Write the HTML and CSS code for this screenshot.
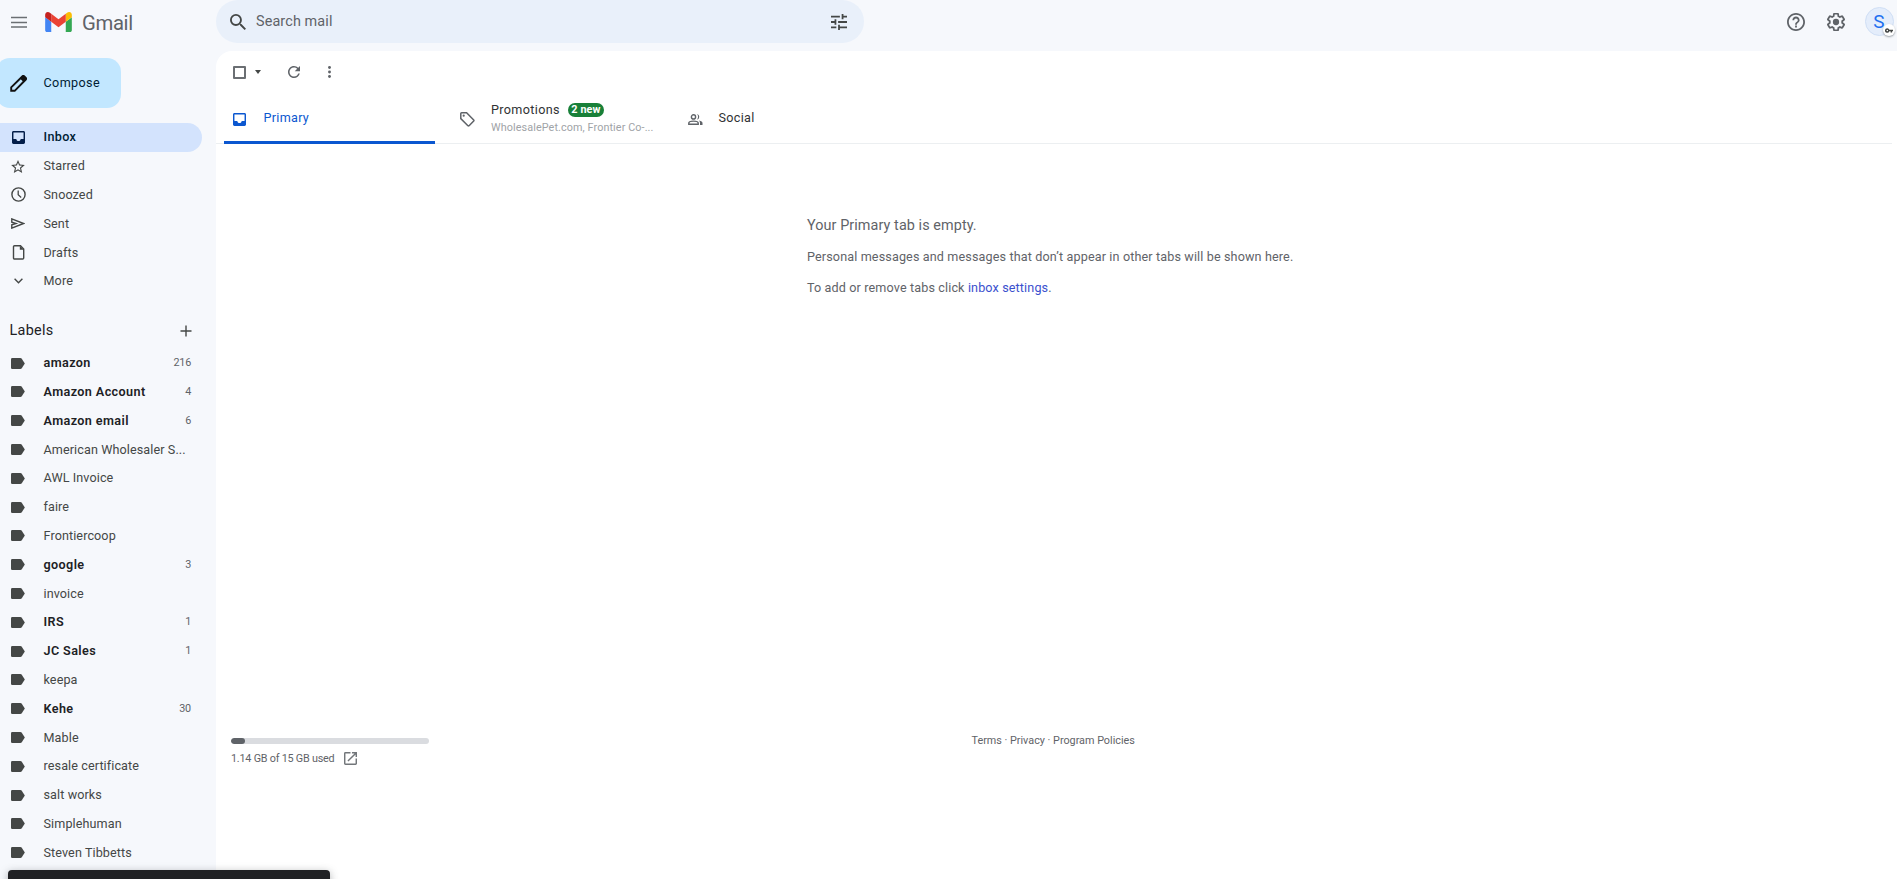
FILE: index.html
```
<!DOCTYPE html>
<html lang="en">
<head>
<meta charset="utf-8">
<title>Gmail</title>
<link rel="stylesheet" href="styles.css">
</head>
<body>
<svg width="0" height="0" class="defs"><defs>
<symbol id="label" viewBox="0 0 14 11"><path d="M1.2 0H9.3Q10.2 0 10.8.8L13.8 5.5 10.8 10.2Q10.2 11 9.3 11H1.2Q0 11 0 9.8V1.2Q0 0 1.2 0Z"/></symbol>
<symbol id="inbox" viewBox="3 3 18 18"><path d="M19 3H5c-1.1 0-2 .9-2 2v14c0 1.1.9 2 2 2h14c1.1 0 2-.9 2-2V5c0-1.1-.9-2-2-2zm0 11h-4c0 1.66-1.35 3-3 3s-3-1.34-3-3H5V5h14v9z"/></symbol>
</defs></svg>
<header class="header">
  <div class="brand">
    <svg class="menu" viewBox="0 0 16 12"><path d="M0 1.500h16M0 6.500h16M0 11h16" fill="none" stroke="#6b6f73" stroke-width="1.500"/></svg>
    <svg class="logo" viewBox="52 42 88 66"><path fill="#4285f4" d="M58 108h14V74L52 59v43c0 3.32 2.69 6 6 6"/><path fill="#34a853" d="M120 108h14c3.32 0 6-2.69 6-6V59l-20 15"/><path fill="#fbbc04" d="M120 48v26l20-15v-8c0-7.42-8.47-11.65-14.4-7.2"/><path fill="#ea4335" d="M72 74V48l24 18 24-18v26L96 92"/><path fill="#c5221f" d="M52 51v8l20 15V48l-5.6-4.2c-5.94-4.45-14.4-.22-14.4 7.2"/></svg>
    <span class="wordmark">Gmail</span>
  </div>
  <div class="search">
    <svg class="i-search" viewBox="3 3 17.5 17.5"><path d="M15.5 14h-.79l-.28-.27A6.471 6.471 0 0 0 16 9.5 6.5 6.5 0 1 0 9.5 16c1.61 0 3.09-.59 4.23-1.57l.27.28v.79l5 4.99L20.49 19l-4.99-5zm-6 0C7.01 14 5 11.99 5 9.5S7.01 5 9.5 5 14 7.01 14 9.5 11.99 14 9.5 14z"/></svg>
    <span class="hint">Search mail</span>
    <svg class="i-tune" viewBox="3 3 18 18"><path d="M3 17v2h6v-2H3zM3 5v2h10V5H3zm10 16v-2h8v-2h-8v-2h-2v6h2zM7 9v2H3v2h4v2h2V9H7zm14 4v-2H11v2h10zm-6-4h2V7h4V5h-4V3h-2v6z"/></svg>
  </div>
  <div class="account">
    <svg class="i-big" viewBox="2 2 20 20"><path d="M11 18h2v-2h-2v2zm1-16C6.48 2 2 6.48 2 12s4.48 10 10 10 10-4.48 10-10S17.52 2 12 2zm0 18c-4.41 0-8-3.59-8-8s3.59-8 8-8 8 3.59 8 8-3.59 8-8 8zm0-14c-2.21 0-4 1.79-4 4h2c0-1.1.9-2 2-2s2 .9 2 2c0 2-3 1.750-3 5h2c0-2.250 3-2.500 3-5 0-2.210-1.790-4-4-4z"/></svg>
    <svg class="i-big" viewBox="2 2 20 20"><path d="M13.850 22.250h-3.700c-.74 0-1.360-.54-1.450-1.270l-.27-1.890c-.27-.14-.53-.29-.79-.46l-1.800.72c-.7.26-1.470-.03-1.810-.65L2.200 15.530c-.35-.66-.2-1.440.36-1.880l1.530-1.190c-.01-.15-.02-.3-.02-.46 0-.15.01-.31.02-.46l-1.520-1.190c-.59-.45-.74-1.260-.37-1.880l1.850-3.190c.34-.62 1.110-.9 1.790-.63l1.810.73c.26-.17.52-.32.78-.46l.27-1.910c.09-.7.710-1.250 1.440-1.250h3.700c.74 0 1.360.54 1.450 1.270l.27 1.890c.27.14.53.29.79.46l1.800-.72c.71-.26 1.480.03 1.820.65l1.840 3.180c.36.66.2 1.440-.36 1.880l-1.520 1.190c.01.150.02.3.02.46s-.01.31-.02.46l1.520 1.190c.56.45.72 1.230.37 1.860l-1.860 3.220c-.34.62-1.110.9-1.800.63l-1.800-.72c-.26.17-.52.32-.78.46l-.27 1.910c-.1.680-.72 1.220-1.460 1.220zm-3.230-2h2.760l.37-2.550.53-.22c.44-.18.88-.44 1.340-.78l.45-.34 2.380.96 1.380-2.400-2.030-1.580.07-.56c.03-.26.06-.51.06-.78s-.03-.53-.06-.78l-.07-.56 2.030-1.580-1.390-2.400-2.390.96-.45-.35c-.42-.32-.87-.58-1.330-.77l-.52-.22-.37-2.550h-2.760l-.37 2.550-.53.21c-.44.19-.88.44-1.340.79l-.45.33-2.380-.95-1.390 2.390 2.030 1.580-.07.56a7 7 0 0 0-.06.79c0 .26.02.53.06.78l.07.56-2.030 1.580 1.380 2.400 2.390-.96.45.35c.43.33.86.58 1.330.77l.53.22.38 2.550z"/><circle cx="12" cy="12" r="3.500"/></svg>
    <div class="avatar">S<span class="key"><svg viewBox="0 0 8 5"><path d="M2.300.2a2.300 2.300 0 1 0 2.100 3.100h1.200v1.300h1.500V3.300H8V1.700H4.400A2.300 2.300 0 0 0 2.300.2zm0 1.500a.8.8 0 1 1 0 1.600.8.8 0 0 1 0-1.600z"/></svg></span></div>
  </div>
</header>
<div class="body">
  <nav class="side">
    <div class="compose"><svg viewBox="0 0 17 17"><path d="M1.200 15.800V12.300L12.500 1.200Q13.300.5 14.100 1.200L15.800 2.900Q16.500 3.700 15.800 4.500L4.700 15.800Z" fill="none" stroke="#111" stroke-width="1.900"/><path d="M10 3.500 12.800.8Q13.500.3 14.300.9L16.200 2.800Q16.800 3.600 16.100 4.300L13.500 7Z"/></svg><span>Compose</span></div>
    <ul class="nav">
      <li class="active"><svg class="n13"><use href="#inbox"/></svg><span>Inbox</span></li>
      <li><svg class="n14" viewBox="2 2 20 19"><path d="M22 9.240l-7.190-.62L12 2 9.190 8.630 2 9.240l5.460 4.730L5.820 21 12 17.270 18.180 21l-1.630-7.030L22 9.240zM12 15.400l-3.760 2.270 1-4.280-3.320-2.880 4.380-.38L12 6.100l1.710 4.040 4.380.38-3.320 2.880 1 4.280L12 15.400z"/></svg><span>Starred</span></li>
      <li><svg class="n15" viewBox="0 0 15 15"><circle cx="7.500" cy="7.500" r="6.600" fill="none" stroke="#444746" stroke-width="1.400"/><path d="M7.200 3.500v4.300l3 2.600" fill="none" stroke="#444746" stroke-width="1.300"/></svg><span>Snoozed</span></li>
      <li><svg class="n14 sent" viewBox="0 0 14 11"><path d="M.8.9 12.500 5.500.8 10.100V6.800L5 5.500.8 4.200Z" fill="none" stroke="#444746" stroke-width="1.400"/></svg><span>Sent</span></li>
      <li><svg class="n15" viewBox="0 0 15 15"><path d="M3.500.8H9.500L12.700 4V13a1 1 0 0 1-1 1H3.500a1 1 0 0 1-1-1V1.800a1 1 0 0 1 1-1Z" fill="none" stroke="#444746" stroke-width="1.400"/><path d="M8.800.8v4h4z"/></svg><span>Drafts</span></li>
      <li class="more"><svg class="n9" viewBox="0 0 9 6"><path d="M.6.8 4.500 4.700 8.400.8" fill="none" stroke="#444746" stroke-width="1.400"/></svg><span>More</span></li>
    </ul>
    <div class="labels-head"><span>Labels</span><svg viewBox="0 0 12 12"><path d="M6 .5v11M.5 6h11" stroke="#444746" stroke-width="1.400"/></svg></div>
    <ul class="nav labels">
      <li class="unread"><svg><use href="#label"/></svg><span>amazon</span><b>216</b></li>
      <li class="unread"><svg><use href="#label"/></svg><span>Amazon Account</span><b>4</b></li>
      <li class="unread"><svg><use href="#label"/></svg><span>Amazon email</span><b>6</b></li>
      <li><svg><use href="#label"/></svg><span>American Wholesaler S...</span></li>
      <li><svg><use href="#label"/></svg><span>AWL Invoice</span></li>
      <li><svg><use href="#label"/></svg><span>faire</span></li>
      <li><svg><use href="#label"/></svg><span>Frontiercoop</span></li>
      <li class="unread"><svg><use href="#label"/></svg><span>google</span><b>3</b></li>
      <li><svg><use href="#label"/></svg><span>invoice</span></li>
      <li class="unread"><svg><use href="#label"/></svg><span>IRS</span><b>1</b></li>
      <li class="unread"><svg><use href="#label"/></svg><span>JC Sales</span><b>1</b></li>
      <li><svg><use href="#label"/></svg><span>keepa</span></li>
      <li class="unread"><svg><use href="#label"/></svg><span>Kehe</span><b>30</b></li>
      <li><svg><use href="#label"/></svg><span>Mable</span></li>
      <li><svg><use href="#label"/></svg><span>resale certificate</span></li>
      <li><svg><use href="#label"/></svg><span>salt works</span></li>
      <li><svg><use href="#label"/></svg><span>Simplehuman</span></li>
      <li><svg><use href="#label"/></svg><span>Steven Tibbetts</span></li>
    </ul>
  </nav>
  <main class="main">
    <div class="toolbar">
      <span class="check"></span><span class="caret"></span>
      <svg class="refresh" viewBox="4 4 16 16"><path d="M17.650 6.350A7.958 7.958 0 0 0 12 4c-4.420 0-7.990 3.580-7.990 8s3.570 8 7.990 8c3.730 0 6.840-2.550 7.730-6h-2.080A5.990 5.990 0 0 1 12 18c-3.310 0-6-2.690-6-6s2.690-6 6-6c1.660 0 3.140.69 4.220 1.780L13 11h7V4l-2.350 2.350z"/></svg>
      <svg class="dots" viewBox="0 0 3 12"><circle cx="1.500" cy="1.500" r="1.450"/><circle cx="1.500" cy="6" r="1.450"/><circle cx="1.500" cy="10.500" r="1.450"/></svg>
    </div>
    <div class="tabs">
      <div class="tab primary"><svg class="n13"><use href="#inbox"/></svg><span>Primary</span></div>
      <div class="tab promo"><svg class="tag" viewBox="0 0 15 15"><path d="M1.600.8H6.600L13.700 7.900Q14.200 8.500 13.700 9.100L9.100 13.700Q8.500 14.200 7.900 13.700L.8 6.600V1.600Q.8.8 1.600.8Z" fill="none" stroke="#5f6368" stroke-width="1.500"/><circle cx="3.700" cy="3.700" r="1.100"/></svg>
        <div><div class="title"><span>Promotions</span><em>2 new</em></div><div class="sub">WholesalePet.com, Frontier Co-...</div></div></div>
      <div class="tab social"><svg class="people" viewBox="0 0 15 11"><g fill="none" stroke="#5f6368" stroke-width="1.400"><circle cx="5.500" cy="2.900" r="2.100"/><path d="M.8 10.200V9.100Q.8 7.100 5.500 7.100T10.200 9.100V10.200Z"/></g><path d="M8.900 0A2.900 2.900 0 0 1 8.900 5.700 4 4 0 0 0 8.900 0ZM11 6.500Q14.500 7.200 14.500 9V11H12V9Q12 7.500 11 6.500Z"/></svg><span>Social</span></div>
    </div>
    <section class="empty">
      <p class="lead">Your Primary tab is empty.</p>
      <p class="msg">Personal messages and messages that don’t appear in other tabs will be shown here.</p>
      <p class="msg">To add or remove tabs click <a>inbox settings</a>.</p>
    </section>
    <footer class="footer">
      <div class="storage"><div class="bar"><i></i></div><div class="used"><span>1.14 GB of 15 GB used</span><svg viewBox="3 3 18 18"><path d="M19 19H5V5h7V3H5a2 2 0 0 0-2 2v14a2 2 0 0 0 2 2h14c1.100 0 2-.9 2-2v-7h-2v7zM14 3v2h3.590l-9.830 9.830 1.410 1.410L19 6.410V10h2V3h-7z"/></svg></div></div>
      <div class="terms">Terms · Privacy · Program Policies</div>
    </footer>
  </main>
</div>
<div class="toast"></div>
</body>
</html>
```
FILE: styles.css
```
* { box-sizing: border-box; }
html, body { margin: 0; height: 879px; overflow: hidden; }
body { background: #f6f8fc; font-family: Roboto, "Liberation Sans", sans-serif; font-size: 12.6px; color: #444746; }
svg { display: block; flex: none; fill: #444746; }
span, div, p { white-space: nowrap; }
.defs { position: absolute; }
.header { height: 51px; display: flex; align-items: flex-start; }
.brand { width: 216px; height: 44px; display: flex; align-items: center; padding-left: 11px; }
.menu { width: 16px; height: 12px; }
.logo { width: 27px; height: 20px; margin-left: 18px; }
.wordmark { margin-left: 10px; font-size: 20.3px; letter-spacing: -.35px; color: #5f6368; padding-top: 1px; }
.search { width: 648px; height: 43px; border-radius: 22px; background: #e9f0fa; display: flex; align-items: center; padding: 0 17px 0 14px; }
.i-search { width: 16px; height: 16px; }
.hint { flex: 1; margin-left: 10px; font-size: 14.4px; letter-spacing: .12px; color: #5f6368; padding-bottom: 1px; }
.i-tune { width: 16px; height: 16px; }
.account { margin-left: auto; height: 44px; padding-right: 3px; display: flex; align-items: center; }
.i-big { width: 18px; height: 18px; margin-right: 22px; fill: #5f6368; }
.i-big + .i-big { margin-right: 20px; }
.avatar { position: relative; width: 29px; height: 29px; margin-top: -1px; border-radius: 50%; border: 1px solid #d0dff5; background: #e4edfb; color: #1f6ff0; font-size: 19px; line-height: 27px; text-align: center; padding-right: 1px; }
.key { position: absolute; left: 17px; top: 16px; width: 12px; height: 12px; border-radius: 50%; background: #fff; box-shadow: 0 1px 2px #9aa0a6; display: grid; place-items: center; }
.key svg { width: 8px; height: 5px; }
.body { display: flex; height: 828px; }
.side { width: 216px; padding-top: 7px; }
.compose { width: 125px; height: 50px; margin-left: -4px; border-radius: 14px; background: #c2e7ff; color: #001d35; display: flex; align-items: center; padding-left: 14px; letter-spacing: .38px; }
.compose svg { width: 17px; height: 17px; margin-right: 16.5px; fill: #111; }
.compose span { padding-bottom: 1px; }
.nav { list-style: none; margin: 15px 0 0; padding: 0; }
.nav li { height: 28.8px; width: 202px; display: grid; grid-template-columns: 36px 1fr auto; align-items: center; padding-right: 11px; letter-spacing: .1px; }
.nav li svg { justify-self: center; }
.nav li span { padding-left: 7.5px; padding-bottom: 1px; }
.nav .active { background: #d3e3fd; border-radius: 0 15px 15px 0; color: #001d35; font-weight: 500; letter-spacing: .35px; }
.nav .active svg { fill: #041e49; }
.n13 { width: 13px; height: 13px; }
.n14 { width: 14px; height: 13px; }
.sent { height: 11px; }
.n15 { width: 15px; height: 15px; }
.n9 { width: 9px; height: 6px; }
.labels-head { height: 32px; margin-top: 20px; display: flex; align-items: center; justify-content: space-between; padding: 0 24px 2px 9.5px; color: #202124; font-size: 14.4px; letter-spacing: .3px; }
.labels-head svg { width: 12px; height: 12px; }
.nav.labels { margin-top: 1px; }
.labels svg { width: 14px; height: 11px; }
.labels b { font-size: 10.8px; font-weight: 400; color: #5f6368; padding-bottom: 1px; letter-spacing: -.2px; }
.nav .unread { font-weight: 600; color: #202124; letter-spacing: .4px; }
.main { flex: 1; background: #fff; border-top-left-radius: 16px; display: flex; flex-direction: column; }
.toolbar { height: 42px; display: flex; align-items: center; padding-left: 17px; }
.toolbar svg { fill: #5f6368; }
.check { width: 13px; height: 13px; border: 2px solid #6b6f73; border-radius: 1px; }
.caret { border: 3.500px solid transparent; border-top: 4px solid #444746; border-bottom: 0; margin-left: 9px; }
.refresh { width: 12px; height: 12px; margin-left: 27px; }
.dots { width: 3px; height: 12px; margin-left: 28px; }
.tabs { height: 51px; margin-right: 5px; border-bottom: 1px solid #eceff1; display: flex; padding-left: 8px; }
.tab { height: 51px; display: flex; align-items: center; letter-spacing: .3px; color: #303234; }
.tab > span { padding-bottom: 2px; }
.primary { width: 211px; border-bottom: 3px solid #0b57d0; border-radius: 2px 2px 0 0; padding: 4px 0 0 9px; color: #0b57d0; }
.primary > span { padding-bottom: 4px; }
.primary svg { fill: #0b57d0; margin-right: 17.5px; }
.promo { width: 229px; padding-left: 24.5px; }
.tag { width: 15px; height: 15px; margin: 2px 16.5px 0 0; fill: #5f6368; }
.title { display: flex; align-items: center; height: 16px; letter-spacing: .36px; }
.title em { margin-left: 8px; width: 36px; height: 14px; border-radius: 7px; background: #188038; color: #fff; font: 700 10.800px/13px Roboto, sans-serif; letter-spacing: .1px; text-align: center; }
.sub { font-size: 10.800px; line-height: 16px; color: #a0a3a7; margin-top: 2px; letter-spacing: .1px; }
.social { padding-left: 24px; }
.people { width: 15px; height: 11px; margin: 2px 15.500px 0 0; fill: #5f6368; }
.empty { padding-left: 591px; padding-top: 71px; flex: 1; color: #5f6368; }
.empty p { margin: 0; }
.lead { font-size: 14.400px; line-height: 22px; letter-spacing: .08px; }
.msg { font-size: 12.600px; line-height: 20px; letter-spacing: .13px; }
.lead + .msg { padding-top: 10px; }
.msg + .msg { padding-top: 11px; }
.empty a { color: #3b50ce; }
.footer { height: 142px; display: flex; padding: 1px 0 0 15px; color: #5f6368; font-size: 10.800px; }
.storage { width: 198px; }
.bar { height: 6px; border-radius: 3px; background: #dadce0; overflow: hidden; }
.bar i { display: block; width: 14px; height: 6px; border-radius: 3px; background: #5f6368; }
.used { display: flex; align-items: center; height: 14px; margin-top: 7px; letter-spacing: -.22px; }
.used svg { width: 13px; height: 13px; margin-left: 10px; fill: #72767a; }
.terms { margin-left: 542.500px; margin-top: -4px; }
.toast { position: absolute; left: 8px; top: 870px; width: 322px; height: 20px; border-radius: 4px; background: #202124; box-shadow: 0 2px 8px rgba(60,64,67,.4); }
```
